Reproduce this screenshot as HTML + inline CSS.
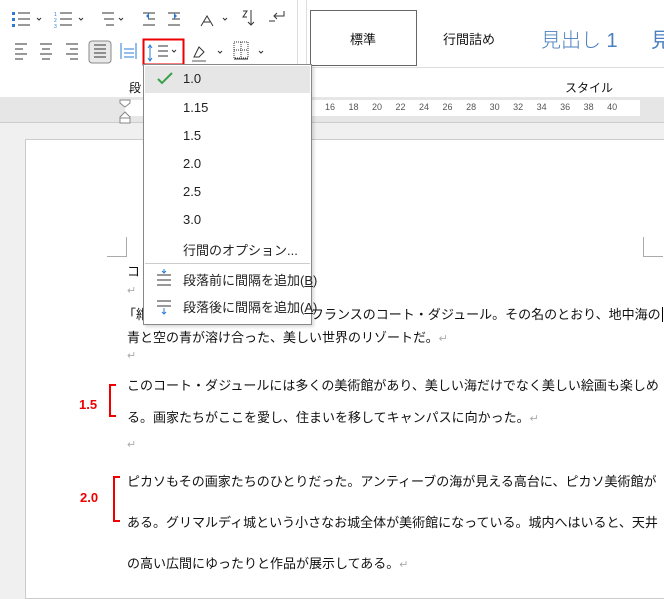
<!DOCTYPE html>
<html><head><meta charset="utf-8"><style>
*{margin:0;padding:0;box-sizing:border-box}
body{width:664px;height:582px;overflow:hidden;background:#f0f0f0;position:relative;font-family:"Liberation Sans","Noto Sans CJK JP",sans-serif;color:#222}
.a{position:absolute}
.t{position:absolute;font-size:13px;white-space:nowrap;color:#111}
.ret{color:#aaa;font-size:11px}
.mi{position:absolute;left:183px;font-size:13px;color:#222}
</style></head><body>
<div class="a" style="left:0;top:0;width:664px;height:97px;background:#fff"></div>
<div class="a" style="left:0;top:0;width:298px;height:97px;border-right:1px solid #ddd;background:#fff"></div>
<div class="a" style="left:306px;top:0;width:358px;height:97px;background:#fff;border-left:1px solid #ddd"></div>
<svg class="a" style="left:0;top:0" width="300" height="70" viewBox="0 0 300 70">
<g stroke="#333" stroke-width="1" fill="none">
<path d="M18 13h12M18 19h12M18 25h12"/><path d="M37 18l2 2 2-2M79 18l2 2 2-2M119 18l2 2 2-2M223 18l2 2 2-2" />
<path d="M60 13h12M60 19h12M60 25h12"/>
<path d="M102 13h12M104 19h10M106 25h8"/>
<path d="M143 13h12M148 19h7M143 25h12"/>
<path d="M168 13h12M172 19h8M168 25h12"/>
<path d="M201 26l6-10 6 10M204 22h6"/>
<path d="M243 11h4l-4 6h4M251 10v15M248 22l3 3 3-3"/>
<path d="M284 11v5h-10M277 13l-3 3 3 3M269 21h6"/>
<path d="M15 44h12M15 49h8M15 54h12M15 59h8"/>
<path d="M40 44h12M42 49h8M40 54h12M42 59h8"/>
<path d="M66 44h12M70 49h8M66 54h12M70 59h8"/>
<rect x="89" y="41" width="22" height="22" rx="3" fill="#e8e8e8" stroke="#888"/>
<path d="M94 45h12M94 49h12M94 53h12M94 57h12"/>
<path d="M121 43v16M136 43v16M124 49h10M124 53h10M124 57h10" stroke="#2b7bd6"/>
<path d="M158 46h10M158 51h10M158 56h10"/>
<path d="M172 50l2 2 2-2M218 51l2 2 2-2M259 51l2 2 2-2"/>
<path d="M194 57l5-10 5 5-5 5z"/><path d="M192 61h14" stroke="#aaa" stroke-width="2"/>
<path d="M234 42h14v16h-14zM241 42v16M234 50h14" stroke-dasharray="1 1"/><path d="M234 59h14"/>
</g>
<g fill="#2b7bd6">
<rect x="12" y="12" width="3" height="3"/><rect x="12" y="18" width="3" height="3"/><rect x="12" y="24" width="3" height="3"/>
<text x="54" y="16" font-size="5">1</text><text x="54" y="22" font-size="5">2</text><text x="54" y="28" font-size="5">3</text>
<path d="M146 16l3-3v6z"/><path d="M177 16l-3-3v6z"/>
<path d="M150 46v14M148 48l2-3 2 3M148 58l2 3 2-3" stroke="#2b7bd6" fill="none"/>
</g>
<rect x="143.5" y="39.5" width="40" height="25" fill="none" stroke="#e00" stroke-width="2"/>
</svg>
<div class="t" style="left:129px;top:79px;font-size:12px">段</div>
<div class="a" style="left:310px;top:10px;width:107px;height:56px;border:1px solid #666;background:#fff"></div>
<div class="t" style="left:350px;top:29px;font-size:13px">標準</div>
<div class="t" style="left:443px;top:29px;font-size:13px">行間詰め</div>
<div class="t" style="left:541px;top:24px;font-size:20px;color:#4b7fbf;font-weight:300">見出し 1</div>
<div class="t" style="left:651px;top:24px;font-size:20px;color:#4b7fbf">見</div>
<div class="a" style="left:307px;top:67px;width:357px;height:1px;background:#ddd"></div>
<div class="t" style="left:565px;top:79px;font-size:12px">スタイル</div>
<div class="a" style="left:0;top:97px;width:664px;height:26px;background:#e6e6e6;border-bottom:1px solid #ccc"></div>
<div class="a" style="left:125px;top:100px;width:515px;height:16px;background:#fff"></div>
<div class="t" style="left:325px;top:102px;font-size:9px;color:#555;word-spacing:11px">16 18 20 22 24 26 28 30 32 34 36 38 40</div>
<svg class="a" style="left:118px;top:99px" width="16" height="26"><path d="M2 1h10v3l-5 4-5-4z M2 18l5-5 5 5v6H2z M2 19h10" fill="#fff" stroke="#888"/></svg>
<div class="a" style="left:25px;top:139px;width:660px;height:460px;background:#fff;border:1px solid #ccc"></div>
<div class="a" style="left:107px;top:237px;width:20px;height:20px;border-right:1px solid #aaa;border-bottom:1px solid #aaa"></div>
<div class="a" style="left:643px;top:237px;width:20px;height:20px;border-left:1px solid #aaa;border-bottom:1px solid #aaa"></div>
<div class="t" style="left:127px;top:261px">コ</div>
<div class="t ret" style="left:127px;top:284px">↵</div>
<div class="t" style="left:123px;top:304px">「紺</div>
<div class="t" style="left:311px;top:304px">フランスのコート・ダジュール。その名のとおり、地中海の<span style="border-left:1px solid #000;margin-left:1px"></span></div>
<div class="t" style="left:127px;top:327px">青と空の青が溶け合った、美しい世界のリゾートだ。<span class="ret">↵</span></div>
<div class="t ret" style="left:127px;top:349px">↵</div>
<div class="t" style="left:127px;top:375px">このコート・ダジュールには多くの美術館があり、美しい海だけでなく美しい絵画も楽しめ</div>
<div class="t" style="left:127px;top:407px">る。画家たちがここを愛し、住まいを移してキャンパスに向かった。<span class="ret">↵</span></div>
<div class="t ret" style="left:127px;top:438px">↵</div>
<div class="t" style="left:127px;top:471px">ピカソもその画家たちのひとりだった。アンティーブの海が見える高台に、ピカソ美術館が</div>
<div class="t" style="left:127px;top:512px">ある。グリマルディ城という小さなお城全体が美術館になっている。城内へはいると、天井</div>
<div class="t" style="left:127px;top:553px">の高い広間にゆったりと作品が展示してある。<span class="ret">↵</span></div>
<div class="a" style="left:109px;top:384px;width:7px;height:33px;border:2px solid #e00;border-right:none"></div>
<div class="t" style="left:79px;top:397px;color:#e00;font-weight:bold;font-size:13px">1.5</div>
<div class="a" style="left:113px;top:476px;width:7px;height:46px;border:2px solid #e00;border-right:none"></div>
<div class="t" style="left:80px;top:490px;color:#e00;font-weight:bold;font-size:13px">2.0</div>
<div class="a" style="left:143px;top:64px;width:169px;height:261px;background:#fff;border:1px solid #888;box-shadow:2px 2px 3px rgba(0,0,0,.15)"></div>
<div class="a" style="left:145px;top:66px;width:165px;height:27px;background:#e6e6e6"></div>
<svg class="a" style="left:155px;top:70px" width="20" height="16"><path d="M3 9l4 4 10-10" stroke="#3aa04a" stroke-width="2" fill="none"/></svg>
<div class="mi" style="top:71px">1.0</div>
<div class="mi" style="top:100px">1.15</div>
<div class="mi" style="top:128px">1.5</div>
<div class="mi" style="top:156px">2.0</div>
<div class="mi" style="top:184px">2.5</div>
<div class="mi" style="top:212px">3.0</div>
<div class="mi" style="top:240px">行間のオプション...</div>
<div class="a" style="left:145px;top:263px;width:165px;height:1px;background:#ccc"></div>
<svg class="a" style="left:154px;top:268px" width="22" height="50">
<path d="M3 7h14M3 12h14M3 17h14M3 33h14M3 38h14" stroke="#333"/>
<path d="M10 1v4M8 3l2 2 2-2M10 40v6M8 44l2 2 2-2" stroke="#2b7bd6" fill="none"/>
</svg>
<div class="mi" style="top:270px">段落前に間隔を追加(<u>B</u>)</div>
<div class="mi" style="top:297px">段落後に間隔を追加(<u>A</u>)</div>
</body></html>
